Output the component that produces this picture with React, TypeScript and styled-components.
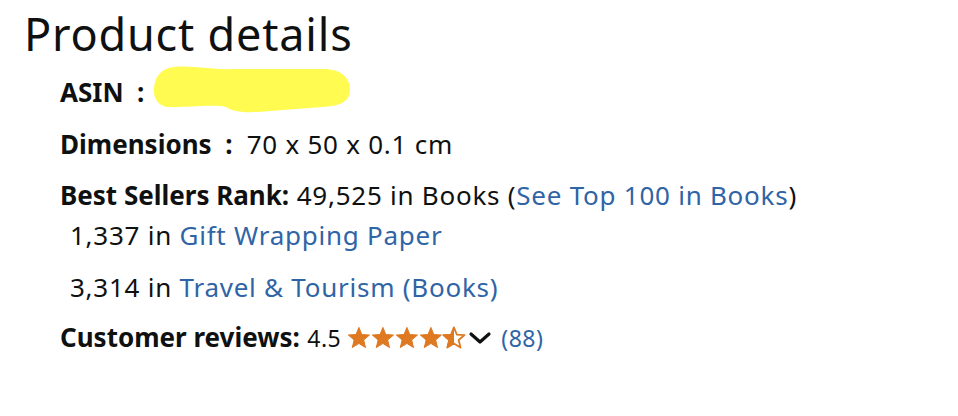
import React from "react";
import styled, { createGlobalStyle } from "styled-components";

const Global = createGlobalStyle`
  html, body { margin: 0; padding: 0; background: #fff; }
  body { font-family: "Noto Sans", "Open Sans", Arial, sans-serif; color: #0f1111; }
`;

const Page = styled.div`
  width: 958px;
  height: 416px;
  padding: 6px 0 0 24px;
  box-sizing: border-box;
`;

const Title = styled.h2`
  margin: 0;
  font-size: 45px;
  font-weight: 400;
  line-height: 56px;
  letter-spacing: 0.8px;
`;

const List = styled.ul`
  list-style: none;
  margin: 12px 0 0 36px;
  padding: 0;
  font-size: 26px;
  line-height: 36px;
  letter-spacing: 0.75px;
`;

const Item = styled.li<{ $gap?: number }>`
  margin-bottom: ${(p) => p.$gap ?? 15}px;
`;

const SubList = styled.ul`
  list-style: none;
  margin: 4px 0 0 0;
  padding: 0 0 0 10px;
`;

const SubItem = styled.li`
  & + & { margin-top: 16px; }
`;

const Label = styled.span`
  font-weight: 700;
  letter-spacing: 0;
`;

const Link = styled.a`
  color: #2f64a6;
  text-decoration: none;
`;

const Redact = styled.svg`
  display: inline-block;
  vertical-align: middle;
  margin: -20px 0 -20px 8px;
  position: relative;
  top: -6px;
`;

const Stars = styled.span`
  display: inline-flex;
  align-items: center;
  vertical-align: -3px;
  margin: -10px 0 -10px 6px;
`;

const Chevron = styled.svg`
  margin: 0 9px 0 2px;
`;

const Small = styled.span`
  font-size: 23px;
  letter-spacing: 0.5px;
`;

const STAR = "M12 1.3 L14.9 8.5 L22.7 9 L16.8 14 L18.7 21.7 L12 17.5 L5.3 21.7 L7.2 14 L1.3 9 L9.1 8.5 Z";

function Star({ half }: { half?: boolean }) {
  return (
    <svg width="23.8" height="24" viewBox="0 0 24 24">
      {half ? (
        <>
          <defs>
            <clipPath id="lh">
              <rect x="0" y="0" width="12" height="24" />
            </clipPath>
          </defs>
          <path d={STAR} fill="none" stroke="#de7921" strokeWidth="1.8" strokeLinejoin="round" />
          <path d={STAR} fill="#de7921" stroke="#de7921" strokeWidth="1" strokeLinejoin="round" clipPath="url(#lh)" />
        </>
      ) : (
        <path d={STAR} fill="#de7921" stroke="#de7921" strokeWidth="1" strokeLinejoin="round" />
      )}
    </svg>
  );
}

export default function App() {
  return (
    <Page>
      <Global />
      <Title>Product details</Title>
      <List>
        <Item $gap={16}>
          <Label>ASIN&nbsp; :</Label>
          <Redact width="200" height="50" viewBox="0 0 200 50">
            <path
              d="M22 3 C40 1 60 6 80 5 L172 5 C190 5 199 15 198 27 C197 38 188 42 170 43 L118 47 C100 49 82 49 74 43 C60 40 30 44 16 43 C6 42 1 34 2 24 C3 12 10 4 22 3 Z"
              fill="#fffb50"
            />
          </Redact>
        </Item>
        <Item>
          <Label>Dimensions&nbsp; :&nbsp;</Label> 70 x 50 x 0.1 cm
        </Item>
        <Item $gap={14}>
          <Label>Best Sellers Rank:</Label> 49,525 in Books (<Link>See Top 100 in Books</Link>)
          <SubList>
            <SubItem>
              1,337 in <Link>Gift Wrapping Paper</Link>
            </SubItem>
            <SubItem>
              3,314 in <Link>Travel &amp; Tourism (Books)</Link>
            </SubItem>
          </SubList>
        </Item>
        <Item>
          <Label>Customer reviews:</Label> <Small>4.5</Small>
          <Stars>
            <Star />
            <Star />
            <Star />
            <Star />
            <Star half />
            <Chevron width="24" height="16" viewBox="0 0 24 16">
              <path d="M3 4 L12 12 L21 4" fill="none" stroke="#0f1111" strokeWidth="3.2" strokeLinecap="round" strokeLinejoin="round" />
            </Chevron>
          </Stars>
          <Small>
            <Link>(88)</Link>
          </Small>
        </Item>
      </List>
    </Page>
  );
}
